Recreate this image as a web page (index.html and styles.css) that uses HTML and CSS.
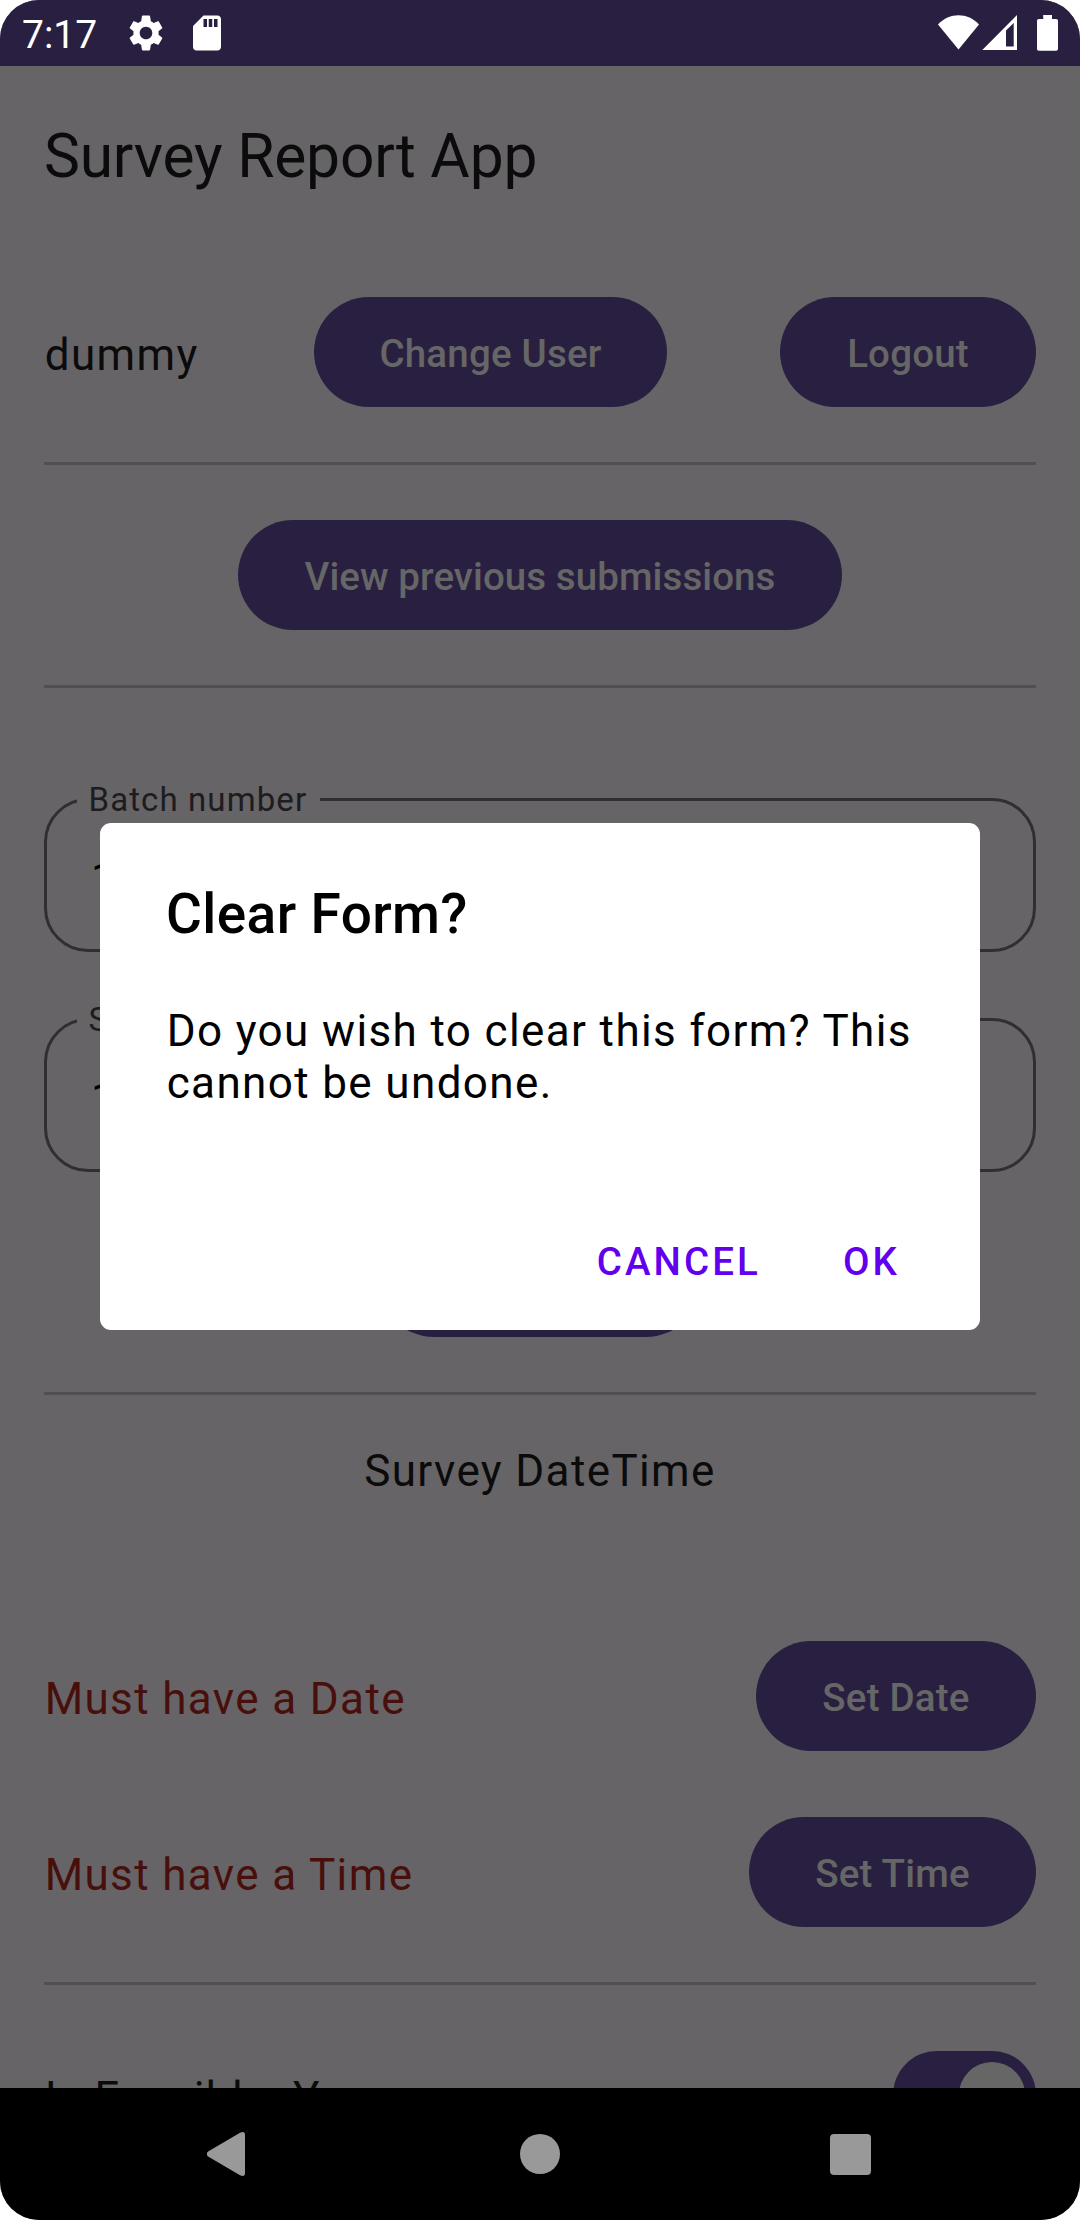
FILE: index.html
```html
<!DOCTYPE html>
<html lang="en">
<head>
<meta charset="utf-8">
<title>Survey Report App</title>
<link rel="stylesheet" href="styles.css">
</head>
<body>
<div class="phone">
  <header class="status">
    <span class="clock">7:17</span>
    <svg class="gear" viewBox="0 0 24 24"><path d="M19.14 12.94c.04-.3.06-.61.06-.94 0-.32-.02-.64-.07-.94l2.03-1.58c.18-.14.23-.41.12-.61l-1.92-3.32c-.12-.22-.37-.29-.59-.22l-2.39.96c-.5-.38-1.03-.7-1.62-.94L14.4 2.81c-.04-.24-.24-.81-.48-.81h-3.84c-.24 0-.43.57-.47.81l-.36 2.54c-.59.24-1.13.57-1.62.94l-2.39-.96c-.22-.08-.47 0-.59.22L2.74 8.87c-.12.21-.08.47.12.61l2.03 1.58c-.05.3-.09.63-.09.94s.02.64.07.94l-2.03 1.58c-.18.14-.23.41-.12.61l1.92 3.32c.12.22.37.29.59.22l2.39-.96c.5.38 1.03.7 1.62.94l.36 2.54c.05.24.24.81.48.81h3.84c.24 0 .44-.57.47-.81l.36-2.54c.59-.24 1.13-.56 1.62-.94l2.39.96c.22.08.47 0 .59-.22l1.92-3.32c.12-.22.07-.47-.12-.61l-2.01-1.58zM12 15.6c-1.98 0-3.6-1.62-3.6-3.6s1.62-3.6 3.6-3.6 3.6 1.62 3.6 3.6-1.62 3.6-3.6 3.6z"/></svg>
    <svg class="card" viewBox="0 0 24 24"><path d="M18 2h-8L4.020 8 4 20c0 1.100.900 2 2 2h12c1.100 0 2-.900 2-2V4c0-1.100-.900-2-2-2zm-6 6.500h-2V4h2v4.500zm3 0h-2V4h2v4.500zm3 0h-2V4h2v4.500z"/></svg>
    <svg class="system" viewBox="0 0 122 36"><path d="M0 9.500C11.500-2.800 29.500-2.800 41 9.500L20.500 34.500z"/><path fill-rule="evenodd" d="M44.300 35L79 0v35zM68 15.500V31.500h7.700V8z"/><path d="M105.200 0h8.800v4h4.200a1.800 1.800 0 0 1 1.800 1.800v28.200a1.800 1.800 0 0 1-1.800 1.800H100.800a1.800 1.800 0 0 1-1.800-1.800V5.800A1.800 1.800 0 0 1 100.800 4h4.400z"/></svg>
  </header>

  <main class="screen">
    <h1 class="title">Survey Report App</h1>
    <section class="row user">
      <span class="text name">dummy</span>
      <button class="btn change">Change User</button>
      <button class="btn logout">Logout</button>
    </section>
    <hr class="rule">
    <section class="center"><button class="btn previous">View previous submissions</button></section>
    <hr class="rule">
    <section class="fields">
      <div class="field"><span class="label">Batch number</span><span class="value">1</span></div>
      <div class="field"><span class="label">S</span><span class="value">1</span></div>
    </section>
    <section class="center clear"><button class="btn" aria-label="Clear Form"></button></section>
    <hr class="rule">
    <h2 class="text heading">Survey DateTime</h2>
    <section class="row date"><span class="text error">Must have a Date</span><button class="btn set-date">Set Date</button></section>
    <section class="row time"><span class="text error">Must have a Time</span><button class="btn set-time">Set Time</button></section>
    <hr class="rule">
    <section class="row feasible"><span class="text">Is Feasible: Yes</span><span class="switch"><span class="thumb"></span></span></section>
  </main>

  <nav class="nav">
    <svg viewBox="0 0 46 46"><path d="M1.500 20.300L33 1.800Q38 -.5 38 4V42Q38 46.500 33 44.200L1.500 25.700Q-2.500 23 1.500 20.300z"/></svg>
    <svg viewBox="0 0 46 46"><circle cx="23" cy="23" r="20"/></svg>
    <svg viewBox="0 0 46 46"><rect x="3" y="3" width="41" height="41" rx="4"/></svg>
  </nav>

  <div class="dialog" role="dialog">
    <h2 class="dialog-title">Clear Form?</h2>
    <p class="dialog-text">Do you wish to clear this form? This cannot be undone.</p>
    <div class="actions"><button class="action">CANCEL</button><button class="action">OK</button></div>
  </div>
</div>
</body>
</html>
```
FILE: styles.css
```css
* { box-sizing: border-box; }
body { margin: 0; background: #fff; font-family: Roboto, sans-serif; }
h1, h2, p { margin: 0; font-weight: 400; }
button { border: 0; font-family: inherit; }

.phone {
  position: relative;
  display: flex;
  flex-direction: column;
  width: 1080px;
  height: 2220px;
  overflow: hidden;
  border-radius: 39px;
  background: #666466;
}

.status {
  display: flex;
  flex: none;
  height: 66px;
  padding-left: 22px;
  background: #292041;
  color: #fff;
}
.status svg { fill: #fff; }
.clock { width: 103px; padding-top: 2px; font-size: 39px; line-height: 66px; }
.gear { width: 42px; height: 42px; margin-top: 12px; }
.card { width: 42px; height: 42px; margin: 12px 0 0 19px; }
.system { width: 122px; height: 36px; margin: 15px 20px 0 auto; }

.screen {
  display: flex;
  flex-direction: column;
  flex: none;
  height: 2022px;
  padding: 0 44px;
  overflow: hidden;
}
.title {
  flex: none;
  height: 231px;
  padding-top: 51px;
  font-size: 60.5px;
  line-height: 80px;
  letter-spacing: -0.2px;
  color: #0b0b0c;
}
.row { display: flex; justify-content: space-between; align-items: center; flex: none; height: 110px; }
.center { display: flex; justify-content: center; flex: none; }
.rule { flex: none; width: 100%; height: 3px; margin: 55px 0; border: 0; background: #514f52; }
.text {
  flex: none;
  padding: 6px 0 0 0.7px;
  font-size: 44px;
  line-height: 66px;
  letter-spacing: 1.375px;
  color: #0b0b0c;
}
.name { width: 157px; }
.btn {
  height: 110px;
  padding: 3px 0 0;
  border-radius: 55px;
  background: #292041;
  color: #666;
  font-size: 38.5px;
  font-weight: 500;
  line-height: 55px;
  letter-spacing: 0.2px;
  white-space: nowrap;
}
.change { width: 353px; }
.logout { width: 256px; }
.previous { width: 604px; letter-spacing: 0.08px; }
.set-date { width: 280px; }
.set-time { width: 287px; }

.fields { display: flex; flex-direction: column; flex: none; gap: 66px; padding-top: 55px; }
.field {
  display: flex;
  flex-direction: column;
  align-items: flex-start;
  height: 154px;
  padding-left: 30px;
  border: 3px solid #302e32;
  border-radius: 44px;
}
.label {
  height: 44px;
  margin-top: -23px;
  padding: 0 12.5px 0 11.5px;
  background: #666466;
  font-size: 33px;
  line-height: 44px;
  letter-spacing: 1.1px;
  color: #1d1c20;
}
.value { padding: 24px 0 0 14px; font-size: 44px; line-height: 66px; color: #000; }
.clear { margin-top: 55px; }
.clear .btn { width: 322px; }
.heading { padding: 0; margin-top: -12px; text-align: center; }
.date { margin-top: 137px; }
.time { margin-top: 66px; }
.error { color: #480f0c; }
.feasible { height: 88px; margin-top: 11px; }
.switch { display: flex; justify-content: flex-end; width: 143px; height: 88px; padding: 11px; border-radius: 44px; background: #292041; }
.thumb { width: 66px; height: 66px; border-radius: 50%; background: #666; }

.nav {
  display: flex;
  justify-content: center;
  align-items: center;
  gap: 264px;
  height: 132px;
  background: #000;
}
.nav svg { width: 46px; height: 46px; fill: #999; }

.dialog {
  position: absolute;
  left: 100px;
  top: 823px;
  width: 880px;
  height: 507px;
  padding: 58px 66px 0;
  border-radius: 11px;
  background: #fff;
  color: #000;
}
.dialog-title { font-size: 55px; font-weight: 500; line-height: 66px; letter-spacing: 0.4px; }
.dialog-text { margin: 58px -2px 0 0; padding-left: 0.7px; font-size: 44px; line-height: 52px; letter-spacing: 1.375px; }
.actions { display: flex; justify-content: flex-end; gap: 38px; margin: 103px -8px 0 0; }
.action {
  height: 99px;
  padding: 0 22px;
  background: transparent;
  color: #6200ee;
  font-size: 38.5px;
  font-weight: 500;
  line-height: 99px;
  letter-spacing: 3.1px;
}
```
